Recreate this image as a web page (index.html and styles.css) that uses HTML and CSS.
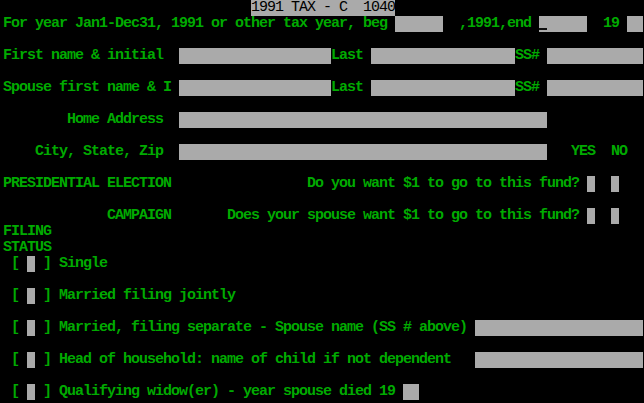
FILE: index.html
```html
<!DOCTYPE html>
<html>
<head>
<meta charset="utf-8">
<link rel="stylesheet" href="styles.css">
</head>
<body>
<div class="screen">
<div class="row">                               <span class="title">1991 TAX - C  1040</span></div>
<div class="row">For year Jan1-Dec31, 1991 or other tax year, beg <span class="f w6"></span>  ,1991,end <span class="f w6 cursor"></span>  19 <span class="f w2"></span></div>
<div class="row"></div>
<div class="row">First name &amp; initial  <span class="f w19"></span>Last <span class="f w18"></span>SS# <span class="f w12"></span></div>
<div class="row"></div>
<div class="row">Spouse first name &amp; I <span class="f w19"></span>Last <span class="f w18"></span>SS# <span class="f w12"></span></div>
<div class="row"></div>
<div class="row">        Home Address  <span class="f w46"></span></div>
<div class="row"></div>
<div class="row">    City, State, Zip  <span class="f w46"></span>   YES  NO</div>
<div class="row"></div>
<div class="row">PRESIDENTIAL ELECTION                 Do you want $1 to go to this fund? <span class="f w1"></span>  <span class="f w1"></span></div>
<div class="row"></div>
<div class="row">             CAMPAIGN       Does your spouse want $1 to go to this fund? <span class="f w1"></span>  <span class="f w1"></span></div>
<div class="row">FILING</div>
<div class="row">STATUS</div>
<div class="row"> [ <span class="f w1"></span> ] Single</div>
<div class="row"></div>
<div class="row"> [ <span class="f w1"></span> ] Married filing jointly</div>
<div class="row"></div>
<div class="row"> [ <span class="f w1"></span> ] Married, filing separate - Spouse name (SS # above) <span class="f w21"></span></div>
<div class="row"></div>
<div class="row"> [ <span class="f w1"></span> ] Head of household: name of child if not dependent   <span class="f w21"></span></div>
<div class="row"></div>
<div class="row"> [ <span class="f w1"></span> ] Qualifying widow(er) - year spouse died 19 <span class="f w2"></span></div>
</div>
</body>
</html>
```
FILE: styles.css
```css
html, body {
  margin: 0;
  padding: 0;
  background: #000;
}
body {
  width: 644px;
  height: 403px;
  overflow: hidden;
}
.screen {
  padding-left: 3px;
  color: #00aa00;
  font-family: "Liberation Mono", "DejaVu Sans Mono", monospace;
  font-weight: bold;
  font-size: 15px;
  letter-spacing: -1px;
}
.row {
  height: 16px;
  line-height: 16px;
  white-space: pre;
  overflow: hidden;
}
.title {
  background: #aaaaaa;
  color: #000;
  font-weight: normal;
  display: inline-block;
  height: 16px;
  vertical-align: top;
}
.f {
  display: inline-block;
  height: 16px;
  vertical-align: top;
  background: #aaaaaa;
}
.cursor {
  background:
    linear-gradient(#111, #111) 0 12px / 8px 2px no-repeat,
    #aaaaaa;
}
.w1 { width: 8px; }
.w2 { width: 16px; }
.w6 { width: 48px; }
.w12 { width: 96px; }
.w18 { width: 144px; }
.w19 { width: 152px; }
.w21 { width: 168px; }
.w46 { width: 368px; }
```
